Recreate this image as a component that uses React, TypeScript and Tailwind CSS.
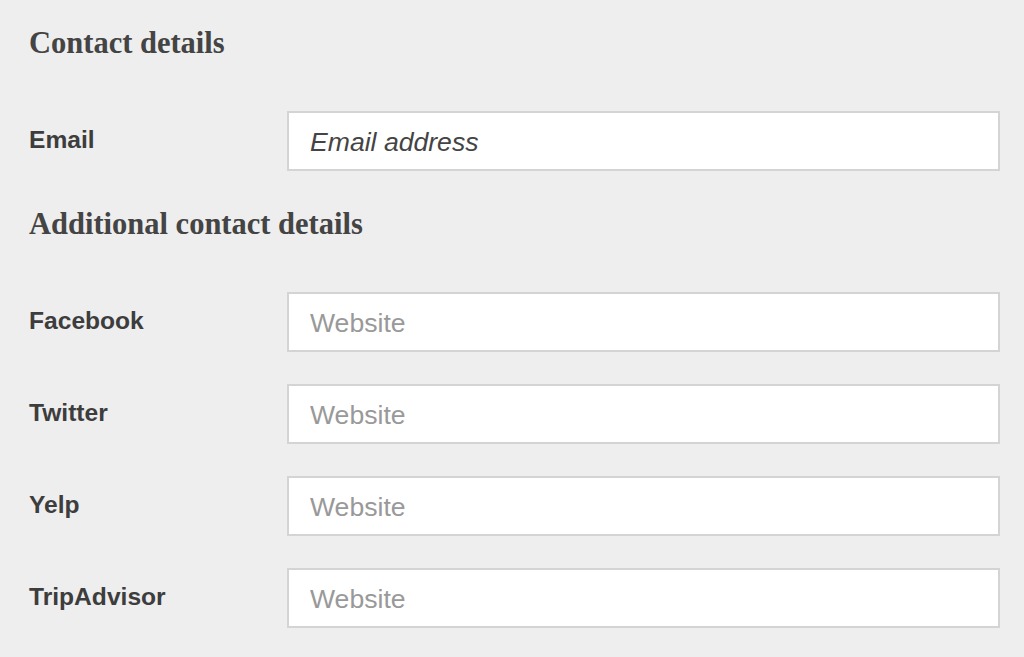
import React from 'react';

const socialFields = ['Facebook', 'Twitter', 'Yelp', 'TripAdvisor'];

function Field({ label, placeholder, email }: { label: string; placeholder: string; email?: boolean }) {
  return (
    <div className="flex items-center">
      <label className="w-[258px] shrink-0 text-[24.6px] font-bold text-[#3d3d3d] -mt-[1px] font-['Liberation_Sans',Arial,sans-serif]">
        {label}
      </label>
      <input
        type={email ? 'email' : 'text'}
        placeholder={placeholder}
        className={`flex-1 h-[60px] bg-white border-2 border-[#d4d4d4] pl-[21px] pr-4 pt-[3px] text-[26.6px] outline-none font-['Liberation_Sans',Arial,sans-serif] ${
          email
            ? 'placeholder:italic placeholder:text-[#444444]'
            : 'placeholder:text-[#999999]'
        }`}
      />
    </div>
  );
}

export default function App() {
  return (
    <div className="min-h-[657px] bg-[#eeeeee] pl-[29px] pr-[24px] pt-[25px]">
      <h2 className="text-[30.5px] leading-[36px] font-bold text-[#444444] font-['Liberation_Serif','Times_New_Roman',serif]">
        Contact details
      </h2>
      <div className="mt-[50px]">
        <Field label="Email" placeholder="Email address" email />
      </div>
      <h2 className="mt-[35px] text-[30.5px] leading-[36px] font-bold text-[#444444] font-['Liberation_Serif','Times_New_Roman',serif]">
        Additional contact details
      </h2>
      <div className="mt-[50px] flex flex-col gap-[32px]">
        {socialFields.map((name) => (
          <Field key={name} label={name} placeholder="Website" />
        ))}
      </div>
    </div>
  );
}
